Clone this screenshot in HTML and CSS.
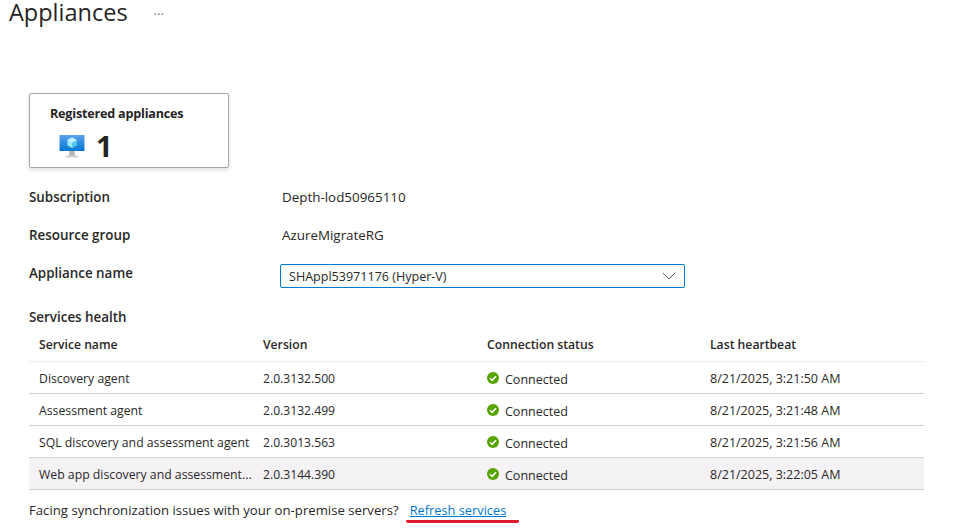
FILE: index.html
```html
<!DOCTYPE html>
<html lang="en">
<head>
<meta charset="utf-8">
<title>Appliances</title>
<link rel="stylesheet" href="styles.css">
</head>
<body>
<header class="title-bar">
  <h1 class="title">Appliances</h1>
  <span class="more">···</span>
</header>
<main class="content">
  <section class="card">
    <div class="card-label">Registered appliances</div>
    <div class="card-value">
      <svg class="monitor" width="26" height="24" viewBox="0 0 26 24" aria-hidden="true">
        <defs>
          <linearGradient id="screen" x1="0" y1="0" x2="0" y2="1">
            <stop offset="0" stop-color="#5ea0ef"/>
            <stop offset="1" stop-color="#0078d4"/>
          </linearGradient>
        </defs>
        <path d="M10.5 17h5l.6 5h-6.2z" fill="#b8b8b8"/>
        <rect x="7" y="21.5" width="12" height="2" rx=".6" fill="#d0d0d0"/>
        <rect x="0.5" y="1" width="25" height="16" rx=".6" fill="url(#screen)"/>
        <path d="M13 3.5l4.6 2.5v5.2L13 14l-4.6-2.8V6z" fill="#9cebff"/>
        <path d="M13 8.6l4.6-2.6v5.2L13 14z" fill="#50c7f0"/>
        <path d="M13 3.5l4.6 2.5L13 8.6 8.4 6z" fill="#c3f1ff"/>
      </svg>
      <span class="count">1</span>
    </div>
  </section>
  <dl class="fields">
    <div class="field field-sub"><dt>Subscription</dt><dd>Depth-lod50965110</dd></div>
    <div class="field field-rg"><dt>Resource group</dt><dd>AzureMigrateRG</dd></div>
    <div class="field field-name">
      <dt>Appliance name</dt>
      <dd class="select">
        <span>SHAppl53971176 (Hyper-V)</span>
        <svg width="14" height="8" viewBox="0 0 14 8" aria-hidden="true"><path d="M.7.7 7 7l6.3-6.3" fill="none" stroke="#605e5c" stroke-width="1"/></svg>
      </dd>
    </div>
  </dl>
  <h2 class="section-title">Services health</h2>
  <div class="table">
    <div class="row head">
      <div>Service name</div><div>Version</div><div>Connection status</div><div>Last heartbeat</div>
    </div>
    <div class="row">
      <div class="cell-name">Discovery agent</div><div class="cell-ver">2.0.3132.500</div>
      <div class="status"><svg class="ok" viewBox="0 0 12 12"><circle cx="6" cy="6" r="6" fill="#57a300"/><path d="M3 6.2 5.1 8.3 9 4.2" fill="none" stroke="#fff" stroke-width="1.6"/></svg><span>Connected</span></div>
      <div>8/21/2025, 3:21:50 AM</div>
    </div>
    <div class="row">
      <div class="cell-name">Assessment agent</div><div class="cell-ver">2.0.3132.499</div>
      <div class="status"><svg class="ok" viewBox="0 0 12 12"><circle cx="6" cy="6" r="6" fill="#57a300"/><path d="M3 6.2 5.1 8.3 9 4.2" fill="none" stroke="#fff" stroke-width="1.6"/></svg><span>Connected</span></div>
      <div>8/21/2025, 3:21:48 AM</div>
    </div>
    <div class="row">
      <div class="cell-name">SQL discovery and assessment agent</div><div class="cell-ver">2.0.3013.563</div>
      <div class="status"><svg class="ok" viewBox="0 0 12 12"><circle cx="6" cy="6" r="6" fill="#57a300"/><path d="M3 6.2 5.1 8.3 9 4.2" fill="none" stroke="#fff" stroke-width="1.6"/></svg><span>Connected</span></div>
      <div>8/21/2025, 3:21:56 AM</div>
    </div>
    <div class="row hover">
      <div class="cell-name">Web app discovery and assessment...</div><div class="cell-ver">2.0.3144.390</div>
      <div class="status"><svg class="ok" viewBox="0 0 12 12"><circle cx="6" cy="6" r="6" fill="#57a300"/><path d="M3 6.2 5.1 8.3 9 4.2" fill="none" stroke="#fff" stroke-width="1.6"/></svg><span>Connected</span></div>
      <div>8/21/2025, 3:22:05 AM</div>
    </div>
  </div>
  <p class="sync">Facing synchronization issues with your on-premise servers?<a class="link" href="#">Refresh services</a></p>
</main>
</body>
</html>
```
FILE: styles.css
```css
* { box-sizing: border-box; }
html, body { margin: 0; padding: 0; }
body {
  width: 956px;
  height: 529px;
  overflow: hidden;
  background: #fff;
  color: #292827;
  font-family: "Open Sans", "Noto Sans", sans-serif;
  font-size: 12.5px;
}
.title-bar {
  display: flex;
  align-items: center;
  height: 24px;
  padding-left: 9px;
}
.title {
  margin: 0;
  font-size: 23.5px;
  font-weight: 400;
  line-height: 24px;
  color: #252423;
}
.more {
  margin-left: 26px;
  padding-top: 4px;
  font-size: 13px;
  line-height: 24px;
  color: #737373;
}
.content { padding: 69px 32px 0 29px; }
.card {
  width: 200px;
  height: 75px;
  padding: 11px 0 0 20px;
  border: 1px solid #a6a6a6;
  border-radius: 2px;
  box-shadow: 0 2px 4px rgba(0, 0, 0, .13);
}
.card-label {
  font-size: 12.6px;
  font-weight: 700;
  letter-spacing: -.2px;
  line-height: 18px;
  color: #252423;
}
.card-value {
  display: flex;
  align-items: center;
  gap: 11px;
  margin-top: 7px;
  padding-left: 9px;
}
.count {
  font-size: 29px;
  font-weight: 700;
  line-height: 32px;
  color: #252423;
}
.fields { margin: 0; font-size: 13.4px; }
.field {
  display: flex;
  align-items: center;
}
.field dt {
  width: 253px;
  font-weight: 600;
  color: #292827;
}
.field dd { margin: 0; }
.field-sub { margin-top: 20px; height: 18px; }
.field-rg { margin-top: 20px; height: 18px; }
.field-name { margin-top: 19px; height: 24px; align-items: flex-start; }
.field-name dt { line-height: 20px; }
.field .select {
  display: flex;
  align-items: center;
  justify-content: space-between;
  width: 405px;
  height: 24px;
  margin: 1px 0 0 -2px;
  padding: 0 8px;
  border: 1px solid #0078d4;
  border-radius: 2px;
  font-size: 12.55px;
}
.section-title {
  margin: 21px 0 0;
  font-size: 13.4px;
  font-weight: 600;
  line-height: 18px;
  color: #292827;
}
.table { width: 895px; }
.row {
  display: grid;
  grid-template-columns: 224px 224px 223px 1fr;
  align-items: center;
  height: 32px;
  padding: 2px 0 0 10px;
  border-bottom: 1px solid #d2d0ce;
}
.row.head {
  height: 36px;
  font-size: 12.2px;
  font-weight: 600;
  border-bottom-color: #edebe9;
}
.row.hover { background: #f5f2f6; }
.cell-name { font-size: 12.25px; white-space: nowrap; }
.cell-ver { font-size: 12.15px; }
.status {
  display: flex;
  align-items: center;
  gap: 6px;
}
.status span { padding-top: 2px; }
.ok { width: 12px; height: 12px; margin-bottom: 1px; }
.sync {
  margin: 11px 0 0;
  font-size: 13.18px;
  line-height: 18px;
}
.link {
  display: inline-block;
  margin-left: 7px;
  padding: 0 13px 1px 4px;
  font-size: 12.8px;
  color: #0078d4;
  text-decoration: underline;
  text-decoration-thickness: 1px;
  border-bottom: 3px solid #e01b2c;
  border-radius: 2px;
  line-height: 17px;
}
```
